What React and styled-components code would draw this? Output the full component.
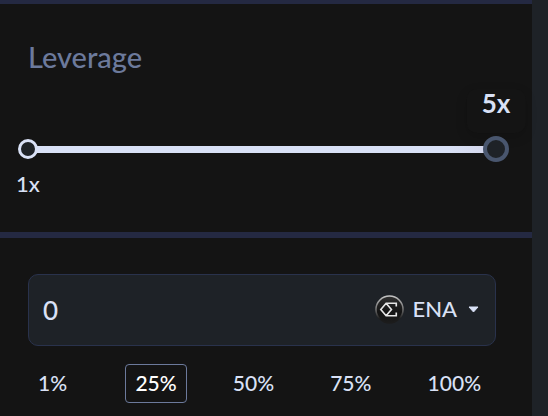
import React, { useState } from "react";
import styled, { createGlobalStyle } from "styled-components";

const colors = {
  background: "#141414",
  surface: "#1e2227",
  divider: "#242942",
  border: "#29324c",
  muted: "#6c7a9c",
  thumb: "#49566e",
  text: "#d9e1f6"
};

const GlobalStyle = createGlobalStyle`
  * {
    box-sizing: border-box;
  }
  body {
    margin: 0;
    background: ${colors.surface};
    color: ${colors.text};
    font-family: Lato, "Liberation Sans", sans-serif;
    font-size: 22px;
    font-weight: 500;
    line-height: 28px;
  }
  button, input {
    color: inherit;
    font: inherit;
  }
`;

const PanelSC = styled.main`
  min-height: 100vh;
  margin-right: 16px;
  background: ${colors.background};
  border-top: 4px solid ${colors.divider};
`;

const LeverageSC = styled.section`
  padding: 35px 36px 34px 28px;
  border-bottom: 6px solid ${colors.divider};
`;

const TitleSC = styled.label`
  display: block;
  color: ${colors.muted};
  font-size: 29px;
  line-height: 36px;
`;

const SliderSC = styled.div`
  position: relative;
  display: flex;
  align-items: center;
  height: 26px;
  margin-top: 61px;
  background: linear-gradient(
      to right,
      ${colors.text} ${props => props.$fill - 10}%,
      #d3d5ea ${props => props.$fill}%,
      ${colors.divider} ${props => props.$fill}%
    )
    center / 100% 7px no-repeat;
`;

const RangeSC = styled.input`
  appearance: none;
  position: relative;
  z-index: 1;
  flex: 1;
  height: 26px;
  margin: 0 -13px;
  background: transparent;
  outline: none;
  cursor: pointer;
  &::-webkit-slider-thumb {
    appearance: none;
    width: 26px;
    height: 26px;
    background: ${colors.surface};
    border: 4px solid ${colors.thumb};
    border-radius: 50%;
  }
`;

const StartDotSC = styled.span`
  position: absolute;
  left: -10px;
  width: 20px;
  height: 20px;
  background: ${colors.surface};
  border: 3px solid ${colors.text};
  border-radius: 50%;
  pointer-events: none;
`;

const TooltipSC = styled.output`
  position: absolute;
  bottom: 29px;
  padding: 0 15px 16px;
  background: ${colors.background};
  border-radius: 10px;
  box-shadow: 0 4px 12px rgba(0, 0, 0, 0.15);
  font-size: 26px;
  font-weight: bold;
  transform: translateX(-50%);
`;

const MinimumSC = styled.div`
  margin: 8px 0 0 -12px;
`;

const AmountSC = styled.section`
  padding: 36px 36px 12px 28px;
`;

const FieldSC = styled.div`
  display: flex;
  align-items: center;
  height: 72px;
  padding: 0 16px 0 14px;
  background: ${colors.surface};
  border: 1px solid ${colors.border};
  border-radius: 10px;
`;

const AmountInputSC = styled.input`
  flex: 1;
  min-width: 0;
  padding: 0;
  background: none;
  border: none;
  outline: none;
  font-size: 26px;
`;

const TokenButtonSC = styled.button`
  display: flex;
  align-items: center;
  padding: 0 0 2px;
  background: none;
  border: none;
  cursor: pointer;
`;

const TokenNameSC = styled.span`
  margin: 0 11px 0 8px;
`;

const PercentListSC = styled.div`
  display: grid;
  grid-template-columns: repeat(5, 1fr);
  gap: 19px;
  justify-items: start;
  margin-top: 18px;
`;

const PercentButtonSC = styled.button`
  height: 39px;
  padding: 0 9px 2px;
  background: none;
  border: 1px solid ${props => (props.$active ? colors.muted : "transparent")};
  border-radius: 4px;
  color: ${props => (props.$active ? "white" : colors.text)};
  font-size: 21px;
  cursor: pointer;
`;

// End Styling

const EnaIcon = () => (
  <svg width="29" height="29" viewBox="0 0 30 30" fill="none" aria-hidden="true">
    <defs>
      <linearGradient id="ena-rim" x1="0" y1="0" x2="0" y2="1">
        <stop offset="0" stopColor="#c4c4c4" />
        <stop offset="0.5" stopColor="#6f6f6f" />
        <stop offset="0.85" stopColor="#1c1c1c" />
      </linearGradient>
      <linearGradient id="ena-face" x1="0" y1="0" x2="0" y2="1">
        <stop offset="0" stopColor="#303030" />
        <stop offset="0.6" stopColor="#141414" />
        <stop offset="1" stopColor="#1c1c1c" />
      </linearGradient>
    </defs>
    <circle cx="15" cy="15" r="14" fill="url(#ena-face)" stroke="url(#ena-rim)" strokeWidth="1.6" />
    <path
      d="M22 12V8.5H11.5L6 15l5.5 6.5H22V18M11.5 8.5L17 15l-5.5 6.5"
      stroke="#e6e6e6"
      strokeWidth="1.7"
    />
  </svg>
);

const Caret = () => (
  <svg width="11" height="7" viewBox="0 0 11 7" fill={colors.text} aria-hidden="true">
    <path d="M1 1h9L5.5 6z" stroke={colors.text} strokeLinejoin="round" />
  </svg>
);

const percents = [1, 25, 50, 75, 100];

const App = () => {
  const [leverage, setLeverage] = useState(5);
  const [amount, setAmount] = useState("0");
  const [percent, setPercent] = useState(25);
  const fill = ((leverage - 1) / 4) * 100;

  return (
    <>
      <GlobalStyle />
      <PanelSC>
        <LeverageSC>
          <TitleSC htmlFor="leverage">Leverage</TitleSC>
          <SliderSC $fill={fill}>
            <StartDotSC />
            <RangeSC
              id="leverage"
              type="range"
              min="1"
              max="5"
              step="0.1"
              value={leverage}
              onChange={e => setLeverage(Number(e.target.value))}
            />
            <TooltipSC htmlFor="leverage" style={{ left: `${fill}%` }}>
              {leverage}x
            </TooltipSC>
          </SliderSC>
          <MinimumSC>1x</MinimumSC>
        </LeverageSC>
        <AmountSC>
          <FieldSC>
            <AmountInputSC
              aria-label="Amount"
              inputMode="decimal"
              value={amount}
              onChange={e => setAmount(e.target.value)}
            />
            <TokenButtonSC type="button" aria-haspopup="listbox">
              <EnaIcon />
              <TokenNameSC>ENA</TokenNameSC>
              <Caret />
            </TokenButtonSC>
          </FieldSC>
          <PercentListSC>
            {percents.map(value => (
              <PercentButtonSC
                key={value}
                type="button"
                $active={value === percent}
                aria-pressed={value === percent}
                onClick={() => setPercent(value)}
              >
                {value}%
              </PercentButtonSC>
            ))}
          </PercentListSC>
        </AmountSC>
      </PanelSC>
    </>
  );
};

export default App;
